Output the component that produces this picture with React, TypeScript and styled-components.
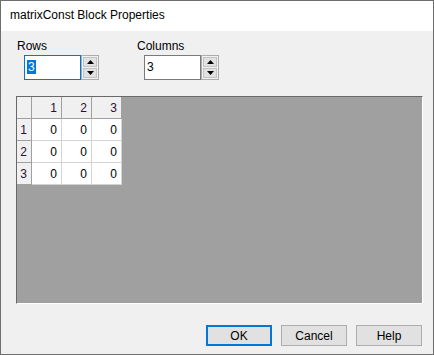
import React from 'react';
import styled, { createGlobalStyle } from 'styled-components';

const GlobalStyle = createGlobalStyle`
  html, body {
    margin: 0;
    padding: 0;
    background: #f0f0f0;
    overflow: hidden;
  }
  * {
    box-sizing: border-box;
  }
`;

const Window = styled.div`
  width: 434px;
  height: 355px;
  border: 1px solid #6e6e6e;
  display: flex;
  flex-direction: column;
  font-family: 'Liberation Sans', Arial, sans-serif;
  font-size: 12px;
  color: #000;
  background: #f0f0f0;
`;

const TitleBar = styled.div`
  height: 30px;
  flex: none;
  background: #fff;
  display: flex;
  align-items: center;
  padding-left: 9px;
  padding-bottom: 2px;
`;

const Body = styled.div`
  flex: 1;
  display: flex;
  flex-direction: column;
  padding: 8px 10px 8px 15px;
`;

const Fields = styled.div`
  display: flex;
  padding-left: 1px;
  gap: 0;
`;

const Field = styled.div<{ $width: number }>`
  width: ${(p) => p.$width}px;
  display: flex;
  flex-direction: column;
`;

const Label = styled.label`
  height: 14px;
  line-height: 14px;
  margin-bottom: 2px;
`;

const Spin = styled.div`
  display: flex;
  margin-left: 7px;
  height: 25px;
`;

const Input = styled.div<{ $focused?: boolean }>`
  width: 57px;
  height: 25px;
  border: 1px solid ${(p) => (p.$focused ? '#0078d7' : '#7a7a7a')};
  background: #fff;
  padding: 4px 0 0 2px;
  line-height: 15px;
`;

const Selected = styled.span`
  background: #0078d7;
  color: #fff;
  padding: 0 1px;
`;

const Arrows = styled.div`
  width: 18px;
  height: 25px;
  border: 1px solid #adadad;
  display: flex;
  flex-direction: column;
  padding: 1px;
  gap: 1px;
  background: #f0f0f0;
`;

const ArrowBtn = styled.div`
  flex: 1;
  background: #e1e1e1;
  border: 1px solid #c4c4c4;
  display: flex;
  align-items: center;
  justify-content: center;
`;

const Panel = styled.div`
  margin-top: 16px;
  height: 208px;
  width: 407px;
  background: #a0a0a0;
  border-top: 1px solid #696969;
  border-left: 1px solid #696969;
  border-right: 1px solid #fff;
  border-bottom: 1px solid #fff;
`;

const Table = styled.div`
  display: grid;
  grid-template-columns: 15px 30px 30px 30px;
  grid-auto-rows: 22px;
  width: fit-content;
`;

const Cell = styled.div<{ $head?: boolean }>`
  background: ${(p) => (p.$head ? '#f0f0f0' : '#fff')};
  border-right: 1px solid ${(p) => (p.$head ? '#a0a0a0' : '#d4d4d4')};
  border-bottom: 1px solid ${(p) => (p.$head ? '#a0a0a0' : '#d4d4d4')};
  text-align: right;
  padding: 4px 4px 0 0;
  line-height: 15px;
  color: ${(p) => (p.$head ? '#2a1038' : '#000')};
`;

const Buttons = styled.div`
  margin-top: auto;
  display: flex;
  justify-content: flex-end;
  gap: 9px;
  padding-right: 1px;
`;

const Button = styled.button<{ $default?: boolean }>`
  width: 66px;
  height: 21px;
  font: inherit;
  color: #000;
  background: #e1e1e1;
  border: ${(p) => (p.$default ? '2px solid #0078d7' : '1px solid #adadad')};
  padding: 0;
`;

function UpArrow({ down }: { down?: boolean }) {
  return (
    <svg width='7' height='4' viewBox='0 0 7 4'>
      <polygon points={down ? '0,0 7,0 3.5,4' : '0,4 7,4 3.5,0'} fill='#000' />
    </svg>
  );
}

function SpinBox({ value, focused }: { value: string; focused?: boolean }) {
  return (
    <Spin>
      <Input $focused={focused}>{focused ? <Selected>{value}</Selected> : value}</Input>
      <Arrows>
        <ArrowBtn>
          <UpArrow />
        </ArrowBtn>
        <ArrowBtn>
          <UpArrow down />
        </ArrowBtn>
      </Arrows>
    </Spin>
  );
}

const cols = ['1', '2', '3'];
const rows = [
  ['0', '0', '0'],
  ['0', '0', '0'],
  ['0', '0', '0'],
];

export default function App() {
  return (
    <>
      <GlobalStyle />
      <Window>
        <TitleBar>matrixConst Block Properties</TitleBar>
        <Body>
          <Fields>
            <Field $width={120}>
              <Label>Rows</Label>
              <SpinBox value='3' focused />
            </Field>
            <Field $width={120}>
              <Label>Columns</Label>
              <SpinBox value='3' />
            </Field>
          </Fields>
          <Panel>
            <Table>
              <Cell $head />
              {cols.map((c) => (
                <Cell $head key={c}>
                  {c}
                </Cell>
              ))}
              {rows.map((r, i) => (
                <React.Fragment key={i}>
                  <Cell $head>{i + 1}</Cell>
                  {r.map((v, j) => (
                    <Cell key={j}>{v}</Cell>
                  ))}
                </React.Fragment>
              ))}
            </Table>
          </Panel>
          <Buttons>
            <Button $default>OK</Button>
            <Button>Cancel</Button>
            <Button>Help</Button>
          </Buttons>
        </Body>
      </Window>
    </>
  );
}
